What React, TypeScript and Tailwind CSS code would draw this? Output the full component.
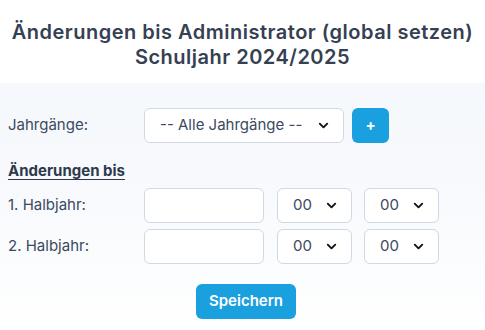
import { ChevronDown } from 'lucide-react'

function Select({ value, width }: { value: string; width: string }) {
    return (
        <div className={`${width} h-[35px] flex items-center justify-between bg-white border border-[#cfd8e3] rounded-md pl-[15px] pr-[12px] text-[15px] text-[#3b4a5e]`}>
            <span>{value}</span>
            <ChevronDown size={15} strokeWidth={3} className="text-[#111]" />
        </div>
    )
}

function TimeRow({ label }: { label: string }) {
    return (
        <div className="flex items-center h-[35px]">
            <div className="w-[136px] text-[15px] text-[#3b4a5e]">{label}</div>
            <div className="w-[120px] h-[35px] bg-white border border-[#cfd8e3] rounded-md" />
            <div className="ml-[13px]"><Select value="00" width="w-[75px]" /></div>
            <div className="ml-[12px]"><Select value="00" width="w-[75px]" /></div>
        </div>
    )
}

export default function App() {
    return (
        <div className="w-[485px] h-[330px] flex flex-col bg-white font-['Inter',sans-serif]">
            <div className="h-[83px] pt-[7px] flex flex-col items-center justify-center bg-white shadow-[0_1px_2px_rgba(0,0,0,0.05)] text-[20px] font-semibold text-[#354052] leading-[25px] tracking-[0.5px]">
                <div>Änderungen bis Administrator (global setzen)</div>
                <div>Schuljahr 2024/2025</div>
            </div>
            <div className="flex-1 flex flex-col px-[8px] pt-[25px] bg-gradient-to-b from-[#f5f8fc] via-[#f8fafd] to-white">
                <div className="flex items-start h-[35px]">
                    <div className="w-[136px] text-[15px] text-[#3b4a5e] pt-[6px]">Jahrgänge:</div>
                    <Select value="-- Alle Jahrgänge --" width="w-[200px]" />
                    <button className="ml-[8px] w-[37px] h-[35px] rounded-md bg-[#1a9fdf] text-white text-[15px] font-bold flex items-center justify-center">+</button>
                </div>
                <div className="mt-[17px] text-[15px] font-bold text-[#2d3a4c] underline underline-offset-[3px]">Änderungen bis</div>
                <div className="mt-[5px] flex flex-col gap-[6px]">
                    <TimeRow label="1. Halbjahr:" />
                    <TimeRow label="2. Halbjahr:" />
                </div>
                <div className="mt-[20px] pl-[7px] flex justify-center">
                    <button className="w-[100px] h-[35px] rounded-md bg-[#1a9fdf] text-white text-[15px] font-semibold">Speichern</button>
                </div>
            </div>
        </div>
    )
}
